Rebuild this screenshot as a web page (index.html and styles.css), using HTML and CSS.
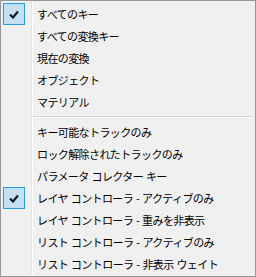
FILE: index.html
```html
<!DOCTYPE html>
<html lang="ja">
<head>
  <meta charset="UTF-8" />
  <title>Menu</title>
  <link rel="stylesheet" href="styles.css">
</head>
<body>
  <div class="menu">
    <div class="item checked">
      <span class="check"><svg width="10" height="9" viewBox="0 0 10 9"><path d="M1 4.5 L4 7.5 L9 1.5" fill="none" stroke="#1a1a1a" stroke-width="2.2"/></svg></span>
      <span class="label">すべてのキー</span>
    </div>
    <div class="item"><span class="check"></span><span class="label">すべての変換キー</span></div>
    <div class="item"><span class="check"></span><span class="label">現在の変換</span></div>
    <div class="item"><span class="check"></span><span class="label">オブジェクト</span></div>
    <div class="item"><span class="check"></span><span class="label">マテリアル</span></div>
    <div class="sep"></div>
    <div class="item"><span class="check"></span><span class="label">キー可能なトラックのみ</span></div>
    <div class="item"><span class="check"></span><span class="label">ロック解除されたトラックのみ</span></div>
    <div class="item"><span class="check"></span><span class="label">パラメータ コレクター キー</span></div>
    <div class="item checked">
      <span class="check"><svg width="10" height="9" viewBox="0 0 10 9"><path d="M1 4.5 L4 7.5 L9 1.5" fill="none" stroke="#1a1a1a" stroke-width="2.2"/></svg></span>
      <span class="label">レイヤ コントローラ - アクティブのみ</span>
    </div>
    <div class="item"><span class="check"></span><span class="label">レイヤ コントローラ - 重みを非表示</span></div>
    <div class="item"><span class="check"></span><span class="label">リスト コントローラ - アクティブのみ</span></div>
    <div class="item"><span class="check"></span><span class="label">リスト コントローラ - 非表示 ウェイト</span></div>
  </div>
</body>
</html>
```

FILE: styles.css
```css
body {
  margin: 0;
  background-color: #f0f0f0;
  font-family: "Noto Sans CJK JP", "Noto Sans", sans-serif;
  font-size: 11px;
  color: #000;
}

.menu {
  width: 256px;
  height: 277px;
  box-sizing: border-box;
  border: 1px solid #979797;
  background-color: #f0f0f0;
  padding-top: 2px;
  position: relative;
}

/* gutter line */
.menu::before {
  content: "";
  position: absolute;
  top: 1px;
  bottom: 1px;
  left: 30px;
  width: 1px;
  background-color: #e2e3e3;
  border-right: 1px solid #fff;
}

.item {
  display: flex;
  align-items: center;
  height: 22px;
  padding-left: 2px;
}

.check {
  width: 20px;
  height: 20px;
  margin-right: 12px;
  display: flex;
  align-items: center;
  justify-content: center;
  border: 1px solid transparent;
}

.checked .check {
  background-color: #c4e0f2;
  border-color: #26a0da;
}

.label {
  letter-spacing: -0.6px;
  word-spacing: 1px;
  white-space: nowrap;
}

.sep {
  height: 1px;
  margin: 3px 2px 3px 31px;
  background-color: #d7d7d7;
  border-bottom: 1px solid #fff;
}
```
